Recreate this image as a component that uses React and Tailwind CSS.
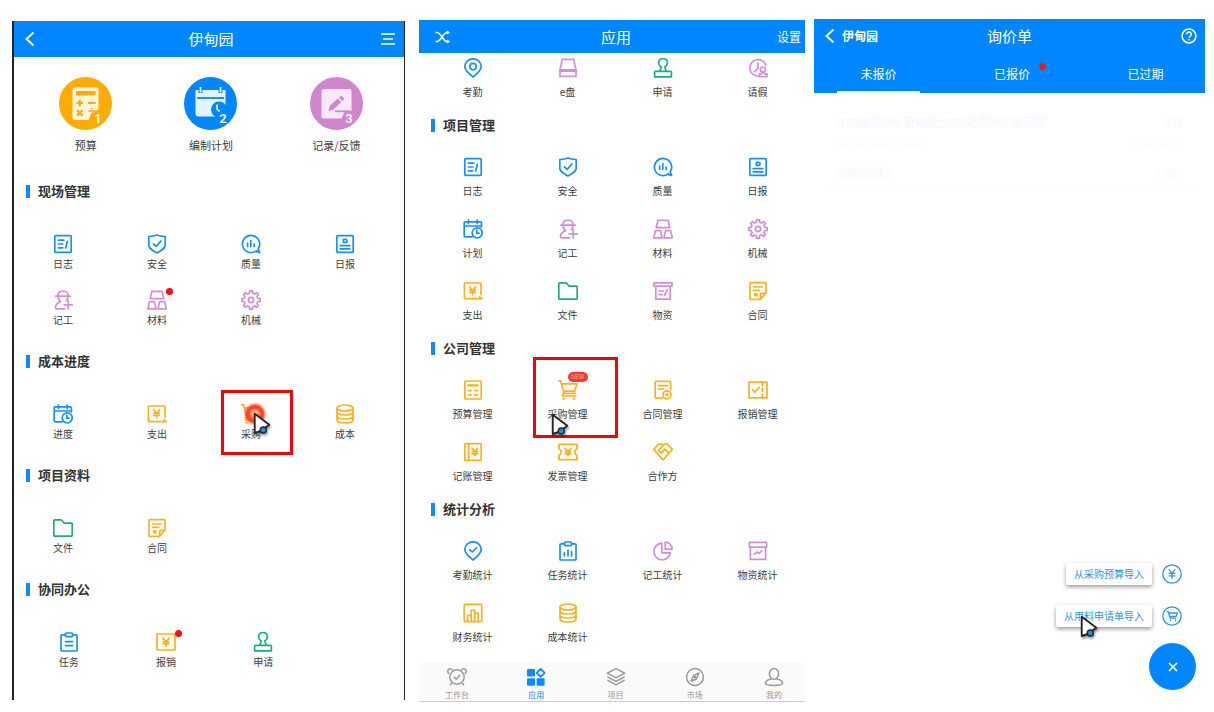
import React from "react";

const COLORS = {
  blue: "text-[#1890fb]",
  purple: "text-[#d28fd8]",
  orange: "text-[#ffb020]",
  green: "text-[#1fae70]",
};

const YEN = "M6.8 6.2 10 9.6 13.2 6.2M10 9.6V14M7.2 9.8h5.6M7.2 11.9h5.6";

function gearOutline(teeth, outer, inner) {
  const points = [];
  for (let k = 0; k < teeth; k++) {
    const base = (k * 360) / teeth - 90;
    [
      [-13, inner],
      [-9, outer],
      [9, outer],
      [13, inner],
    ].forEach(([offset, r]) => {
      const a = ((base + offset) * Math.PI) / 180;
      points.push(`${(10 + r * Math.cos(a)).toFixed(2)} ${(10 + r * Math.sin(a)).toFixed(2)}`);
    });
  }
  return `M${points.join("L")}z`;
}

const ICONS = {
  log: (
    <>
      <rect x="1.8" y="1.6" width="16.4" height="16.8" rx="1" />
      <path d="M5.4 6.2h5.4M5.4 10h4.4M5.4 13.8h4.4M14.4 7.2l-1.8 6.8" />
    </>
  ),
  shield: (
    <>
      <path d="M10 1c2.400 1 5 1.400 8.200 1.500v8.800c0 3-3.400 5-8.200 7.700-4.800-2.700-8.200-4.700-8.200-7.700V2.500C4.800 2.400 7.600 2 10 1z" />
      <path d="M6.400 9.800l2.600 2.600 5-5.400" />
    </>
  ),
  quality: (
    <>
      <path d="M15.600 16.600a8.600 8.600 0 1 1 1.600-1.800l1.400 3.600-3-.8" />
      <path d="M6.600 9v3.400M9.800 6.600v5.800M13.200 10v2.400" />
    </>
  ),
  daily: (
    <>
      <rect x="1.800" y="1.600" width="16.400" height="16.800" rx="1" />
      <path d="M8.400 5.400h2.200a1.500 1.500 0 0 1 0 3H8.400zM5.200 11.600h9.600M5.200 14.800h9.600" />
    </>
  ),
  plan: (
    <>
      <path d="M18.400 8V3.800a1 1 0 0 0-1-1H2.200a1 1 0 0 0-1 1v13a1 1 0 0 0 1 1h7M1.200 7h17.200M5.400 1v3.600M14.200 1v3.600" />
      <circle cx="14.200" cy="13.800" r="5" />
      <path d="M13.800 11v3.200h2.200" />
    </>
  ),
  worker: (
    <path d="M2.800 6.200h14.400M4.800 6.200C4.800 3 7 1 10 1s5.200 2 5.200 5.200M5.200 6.400c0 2.600 1 4.400 2.400 5.400-3 1.200-5.200 2.800-5.200 5.800 0 .8.400 1.200 1.200 1.200h8M15 6.400c0 1.600-.6 3-1.600 4.200M15.200 10.800v8M11 14.800h8.400" />
  ),
  material: (
    <path d="M4.900 1.400h10.200l1.700 7.200H3.200zM2.400 11.600h5l1.700 7.200H.8zM12.600 11.600h5l1.700 7.200H11z" />
  ),
  gear: (
    <>
      <path d={gearOutline(8, 9.300, 7)} />
      <circle cx="10" cy="10" r="2.600" />
    </>
  ),
  expense: (
    <>
      <path d="M18 13.600V3a1 1 0 0 0-1-1H2.400a1 1 0 0 0-1 1v13.600a1 1 0 0 0 1 1H19.200M16.800 15.800l2.200 1.800" />
      <path d="M6.600 5.800 9.600 9l3-3.200M9.600 9v4.600M6.800 9.200h5.600M6.800 11.400h5.600" />
    </>
  ),
  folder: (
    <path d="M.8 17.200V2.800a1 1 0 0 1 1-1h6.400l3 3.400h7a1 1 0 0 1 1 1v11a1 1 0 0 1-1 1H1.800a1 1 0 0 1-1-1z" />
  ),
  supplies: (
    <path d="M1 1.800h18v3.400H1zM2.800 5.200v13h14.400v-13M6 10h4.400M5.800 13.600h3.400M14.200 8.800l-2.600 5.400" />
  ),
  contract: (
    <>
      <path d="M18 12V2.600a1 1 0 0 0-1-1H3a1 1 0 0 0-1 1v14.800a1 1 0 0 0 1 1h9.400zM12.600 18v-4.600a1 1 0 0 1 1-1h4.200" />
      <path d="M5.600 6h8.800M5.600 9.400h6" />
      <circle cx="7.800" cy="13.800" r="1.200" fill="currentColor" />
    </>
  ),
  stamp: (
    <path d="M8.200 8.800a4.400 4.400 0 1 1 3.600 0l1.400 4.600h4.200a1 1 0 0 1 1 1v4.400H1.600v-4.400a1 1 0 0 1 1-1h4.200zM7 13.400h6" />
  ),
  pin: (
    <>
      <path d="M10 19C5.600 15.600 1.800 12.400 1.800 8.600a8.200 7.800 0 0 1 16.400 0C18.200 12.400 14.400 15.600 10 19z" />
      <circle cx="10" cy="8.600" r="3.200" />
    </>
  ),
  pinCheck: (
    <>
      <path d="M10 19C5.600 15.600 1.800 12.400 1.800 8.600a8.200 7.800 0 0 1 16.400 0C18.200 12.400 14.400 15.600 10 19z" />
      <path d="M6.600 8.600 9.200 11l4.400-4.200" />
    </>
  ),
  disk: (
    <>
      <path d="M4.200 1.400h11.600l2.200 11H2zM2 12.400h16v6H2z" />
      <path d="M2.400 12.600h15.200" strokeWidth="3" />
    </>
  ),
  leave: (
    <>
      <path d="M18 7.200A8.300 8.300 0 1 0 10 18.200M10 5v5.400L6.600 13.600" />
      <circle cx="15" cy="11.600" r="2.600" />
      <path d="M13.800 14v1.800h-2.400v2.800h7.600v-2.800h-2.600V14" />
    </>
  ),
  cart: (
    <>
      <path d="M.8.800h1.800l3.400 12.600h11.200M3.400 3.800H19l-2.400 7.400H5.400" />
      <path d="M5.800 13.400 4.400 16h13.400" />
      <path d="M5.200 18.800h.8M15.600 18.800h.8" strokeWidth="2" />
    </>
  ),
  budget: (
    <>
      <rect x="1.800" y="1" width="16.400" height="18" rx="1" />
      <path d="M5.200 5.400h9.600" strokeWidth="2.200" />
      <path d="M5.400 10.600h2.600M11.800 10.600h2.600M5.400 14.800h2.600M11.800 14.800h2.600" />
    </>
  ),
  contractManage: (
    <>
      <path d="M17.600 9.600V2.400a1 1 0 0 0-1-1H3.200a1 1 0 0 0-1 1v14.800a1 1 0 0 0 1 1h6.200M5.200 5.600h9.400M5.200 9h5.600" />
      <circle cx="14" cy="14.800" r="4" />
      <circle cx="14" cy="14.800" r=".9" fill="currentColor" />
    </>
  ),
  ticketCheck: (
    <>
      <path d="M1 2.200h18v15.600H1z" />
      <path d="M14.400 2.400v3.200M14.400 8.400v3.200M14.400 14.400v3.200" strokeWidth="2" />
      <path d="M4.600 9.600l2.400 2.600 4.200-4.800" />
    </>
  ),
  ledger: (
    <>
      <rect x="1.800" y="1.600" width="16.400" height="16.800" rx="1" />
      <path d="M5.600 1.800v16.400" />
      <path d="M9 6.200 11.800 9.400 14.600 6.200M11.800 9.400v4.400M9 9.600h5.600M9 11.800h5.600" />
    </>
  ),
  invoice: (
    <>
      <path d="M1 2.400h18v4.400a3.400 3.400 0 0 0 0 6.400v4.400H1v-4.400a3.400 3.400 0 0 0 0-6.400z" />
      <path d={YEN} />
    </>
  ),
  partner: (
    <path d="M.8 7.400 5.400 2.200h3.400L10 3.600l1.200-1.400h3.400l4.600 5.200L10 18zM10 3.600 5.400 8.400l2.800 2.800 3.800-4 3.800 4" />
  ),
  clipboard: (
    <>
      <path d="M6.400 2.800H3a1 1 0 0 0-1 1v14.200a1 1 0 0 0 1 1h14a1 1 0 0 0 1-1V3.800a1 1 0 0 0-1-1h-3.400" />
      <rect x="6.400" y="1" width="7.200" height="3.600" rx="1" />
      <path d="M6.400 9.600h7.200M6.400 13.600h7.200" />
    </>
  ),
  clipboardChart: (
    <>
      <path d="M6.400 2.800H3a1 1 0 0 0-1 1v14.200a1 1 0 0 0 1 1h14a1 1 0 0 0 1-1V3.800a1 1 0 0 0-1-1h-3.400" />
      <rect x="6.400" y="1" width="7.200" height="3.600" rx="1" />
      <path d="M6.400 11.800v3M10 9.200v5.600M13.600 10.600v4.200" />
    </>
  ),
  pie: (
    <>
      <path d="M8.800 2.200a8.300 8.300 0 1 0 8.600 9.600H8.800z" />
      <path d="M12.200 1.200v7h7a7 7 0 0 0-7-7z" />
    </>
  ),
  suppliesChart: (
    <path d="M1.400 1.400h17.200v4.800H1.400zM2.400 6.200v12.200h15.200V6.200M6.400 13.400l2.600-2.400 2 1.400 2.800-2.400" />
  ),
  finance: (
    <>
      <rect x="1.200" y="1.400" width="17.600" height="17.200" rx="1" />
      <path d="M4.600 18v-5.600h3.600M8.200 18V7h3.400v11M11.600 10.200h3.600V18" />
    </>
  ),
  coins: (
    <>
      <ellipse cx="10" cy="4" rx="8" ry="3" />
      <path d="M2 4v12c0 1.800 3.400 3 8 3s8-1.200 8-3V4M2 8c0 1.800 3.400 3 8 3s8-1.200 8-3M2 12c0 1.800 3.400 3 8 3s8-1.200 8-3" />
    </>
  ),
  reimburse: (
    <>
      <rect x="1" y="2" width="18" height="16" rx=".6" />
      <path d={YEN} />
    </>
  ),
};

function Icon({ name }) {
  return (
    <svg
      viewBox="0 0 20 20"
      className="h-5 w-5 shrink-0"
      fill="none"
      stroke="currentColor"
      strokeWidth="1.700"
      strokeLinecap="round"
      strokeLinejoin="round"
      aria-hidden="true"
    >
      {ICONS[name]}
    </svg>
  );
}

function Pointer({ className }) {
  return (
    <svg
      viewBox="0 0 18 24"
      className={`pointer-events-none absolute h-7 w-[21px] drop-shadow-[1px_2px_1px_rgba(0,0,0,0.4)] ${className}`}
      aria-hidden="true"
    >
      <path d="M1.500 1.500v16.500l4.500-1.500 8-5.500z" fill="#fff" stroke="#26262c" strokeWidth="1.600" strokeLinejoin="round" />
      <circle cx="8.800" cy="15.400" r="2.600" fill="#1e93cc" stroke="#1c2a38" strokeWidth="1.200" />
    </svg>
  );
}

function Item({ icon, color, label, dot, isNew, roomy, children }) {
  return (
    <button type="button" className={`relative flex flex-col items-center ${roomy ? "gap-1.5" : "gap-0.5"}`}>
      <span className={`relative ${COLORS[color]}`}>
        <Icon name={icon} />
        {dot && <span className="absolute -top-0.5 -right-1.5 h-[7px] w-[7px] rounded-full bg-[#fd0d0d]" />}
        {isNew && (
          <span className="absolute -top-2 left-2.5 flex h-2.5 w-5 items-center justify-center rounded-full bg-[#f93a30] text-[6px] leading-none text-[#ffb3ae]">
            NEW
          </span>
        )}
      </span>
      <span className="text-[10px] leading-4 whitespace-nowrap text-[#3c3c3c]">{label}</span>
      {children}
    </button>
  );
}

function SectionTitle({ children }) {
  return (
    <h2 className="flex h-5 items-center gap-2 pl-3 text-[13px] leading-5 font-bold text-[#333]">
      <span className="h-[13px] w-1 bg-[#0a8bff]" />
      {children}
    </h2>
  );
}

const projectSections = [
  {
    title: "现场管理",
    items: [
      ["log", "blue", "日志"],
      ["shield", "blue", "安全"],
      ["quality", "blue", "质量"],
      ["daily", "blue", "日报"],
      ["worker", "purple", "记工"],
      ["material", "purple", "材料", "dot"],
      ["gear", "purple", "机械"],
    ],
  },
  {
    title: "成本进度",
    items: [
      ["plan", "blue", "进度"],
      ["expense", "orange", "支出"],
      ["cart", "orange", "采购", "tap"],
      ["coins", "orange", "成本"],
    ],
  },
  {
    title: "项目资料",
    items: [
      ["folder", "green", "文件"],
      ["contract", "orange", "合同"],
    ],
  },
  {
    title: "协同办公",
    wide: true,
    items: [
      ["clipboard", "blue", "任务"],
      ["reimburse", "orange", "报销", "dot"],
      ["stamp", "green", "申请"],
    ],
  },
];

const steps = [
  {
    label: "预算",
    n: 1,
    fill: "#ffab00",
    art: (
      <>
        <path d="M15.500 10.500h22a2 2 0 0 1 2 2V32l-7 4-3 7H15.500a2 2 0 0 1-2-2V12.500a2 2 0 0 1 2-2z" fill="#fff5dc" />
        <path d="M17 14h19.500v4.500H17z" fill="#ffab00" />
        <path d="M17.500 26h6.500M20.700 22.800v6.500M29 26h7.500M18 33.300l5.500 5.500M23.500 33.300l-5.500 5.500" stroke="#ffab00" strokeWidth="2.200" />
        <path d="M29.500 34h6.500M32.700 31v1" stroke="#ffab00" strokeWidth="1.400" />
      </>
    ),
  },
  {
    label: "编制计划",
    n: 2,
    fill: "#0087ff",
    art: (
      <>
        <path d="M11.500 13h30v26.500h-27a3 3 0 0 1-3-3z" fill="#e4f3ff" />
        <path d="M13 21h27" stroke="#0087ff" strokeWidth="1.800" />
        <path d="M16.500 9v7M36.500 9v7" stroke="#0087ff" strokeWidth="4" />
        <path d="M16.500 10v5.500M36.500 10v5.500" stroke="#e4f3ff" strokeWidth="1.800" />
        <circle cx="35" cy="32.500" r="8" fill="#0087ff" />
        <path d="M36 38h6v-6h-3z" fill="#0087ff" />
        <path d="M33 27.500v4.500l2.500 2.500" stroke="#e4f3ff" strokeWidth="1.700" fill="none" />
      </>
    ),
  },
  {
    label: "记录/反馈",
    n: 3,
    fill: "#cf86cf",
    art: (
      <>
        <path d="M13.500 12h26a2 2 0 0 1 2 2v20l-7 1-3 6.500h-18a2 2 0 0 1-2-2V14a2 2 0 0 1 2-2z" fill="#f8e9f8" />
        <path d="M18.500 34l1.200-5 8-7.500 3.600 3.600-8 7.700zM29 20.500l2.200-2 3.400 3.400-2.200 2z" fill="#cf86cf" />
        <path d="M25 34.300h16" stroke="#cf86cf" strokeWidth="1.800" />
      </>
    ),
  },
];

function ProjectPhone() {
  return (
    <section className="mt-[21px] mr-3.5 mb-3 min-w-0 flex-[390] border-r border-l-2 border-[#222] bg-white">
      <header className="grid h-9 grid-cols-3 items-center bg-[#0087ff] pr-2 pl-3 text-white">
        <button type="button" aria-label="返回" className="-ml-1 w-fit">
          <svg viewBox="0 0 16 16" className="h-4 w-4" fill="none" stroke="currentColor" strokeWidth="1.900">
            <path d="M11.500 1.500 4.500 8l7 6.500" />
          </svg>
        </button>
        <h1 className="text-center text-[15px] leading-5">伊甸园</h1>
        <button type="button" aria-label="菜单" className="w-fit justify-self-end">
          <svg viewBox="0 0 16 14" className="h-3.5 w-4" fill="none" stroke="currentColor" strokeWidth="1.600">
            <path d="M1 2h14M3 7h10M1 12h14" />
          </svg>
        </button>
      </header>
      <div className="mt-5 grid grid-cols-3 pr-[5px] pl-[9px]">
        {steps.map((s) => (
          <button type="button" key={s.n} className="flex flex-col items-center gap-[7px]">
            <svg viewBox="0 0 53 53" className="h-[53px] w-[53px]" aria-hidden="true">
              <circle cx="26.500" cy="26.500" r="26.500" fill={s.fill} />
              {s.art}
              <text x="39" y="46" textAnchor="middle" fill="#fff" fontSize="13" fontFamily="Roboto, sans-serif" fontWeight="500">
                {s.n}
              </text>
            </svg>
            <span className="text-[11px] leading-4 text-[#3c3c3c]">{s.label}</span>
          </button>
        ))}
      </div>
      <div className="mt-7 flex flex-col gap-[23px]">
        {projectSections.map((s) => (
          <div key={s.title}>
            <SectionTitle>{s.title}</SectionTitle>
            <div
              className={`mt-[33px] grid gap-y-[18px] ${s.wide ? "grid-cols-3 pr-[92px] pl-1.5" : "grid-cols-4 pr-3 pl-0.5"}`}
            >
              {s.items.map(([icon, color, label, flag]) => (
                <Item key={label} icon={icon} color={color} label={label} dot={flag === "dot"}>
                  {flag === "tap" && (
                    <>
                      <span className="absolute top-0 left-1/2 -ml-1.5 h-5 w-5 rounded-full border-[5px] border-[#ff3c1e] bg-[#ff9a50]/70 blur-[1px]" />
                      <span className="absolute -top-3.5 left-1/2 -ml-[30px] h-[65px] w-[72px] border-[3px] border-[#f20505]" />
                      <Pointer className="top-2 left-1/2 ml-0.5" />
                    </>
                  )}
                </Item>
              ))}
            </div>
          </div>
        ))}
      </div>
    </section>
  );
}

const appSections = [
  {
    items: [
      ["pin", "blue", "考勤"],
      ["disk", "purple", "e盘"],
      ["stamp", "green", "申请"],
      ["leave", "purple", "请假"],
    ],
  },
  {
    title: "项目管理",
    items: [
      ["log", "blue", "日志"],
      ["shield", "blue", "安全"],
      ["quality", "blue", "质量"],
      ["daily", "blue", "日报"],
      ["plan", "blue", "计划"],
      ["worker", "purple", "记工"],
      ["material", "purple", "材料"],
      ["gear", "purple", "机械"],
      ["expense", "orange", "支出"],
      ["folder", "green", "文件"],
      ["supplies", "purple", "物资"],
      ["contract", "orange", "合同"],
    ],
  },
  {
    title: "公司管理",
    items: [
      ["budget", "orange", "预算管理"],
      ["cart", "orange", "采购管理", "tap"],
      ["contractManage", "orange", "合同管理"],
      ["ticketCheck", "orange", "报销管理"],
      ["ledger", "orange", "记账管理"],
      ["invoice", "orange", "发票管理"],
      ["partner", "orange", "合作方"],
    ],
  },
  {
    title: "统计分析",
    items: [
      ["pinCheck", "blue", "考勤统计"],
      ["clipboardChart", "blue", "任务统计"],
      ["pie", "purple", "记工统计"],
      ["suppliesChart", "purple", "物资统计"],
      ["finance", "orange", "财务统计"],
      ["coins", "orange", "成本统计"],
    ],
  },
];

const tabs = [
  {
    label: "工作台",
    art: (
      <>
        <circle cx="10" cy="10" r="7.200" />
        <path d="M6.800 9.800l2.400 2.400 4-4.400M4.800 15.800 3 18.400M15.200 15.800l1.800 2.600M2.200 6.800a2.600 2.600 0 1 1 3.400-3.600M17.800 6.800a2.600 2.600 0 1 0-3.400-3.600" />
      </>
    ),
  },
  {
    label: "应用",
    active: true,
    art: (
      <>
        <g fill="currentColor" stroke="none">
          <rect x="1" y="2" width="8" height="7.600" rx="1" />
          <rect x="1" y="11.200" width="8" height="7.600" rx="1" />
          <rect x="10.600" y="11.200" width="8" height="7.600" rx="1" />
        </g>
        <path d="M14.600 1.800 18.600 5.800l-4 4-4-4z" strokeWidth="1.800" />
      </>
    ),
  },
  {
    label: "项目",
    art: <path d="M10 1.600 18.600 6.200 10 10.800 1.400 6.200zM1.400 9.800 10 14.400l8.600-4.600M1.400 13.200 10 17.800l8.600-4.600" />,
  },
  {
    label: "市场",
    art: (
      <>
        <circle cx="10" cy="10" r="8.400" />
        <path d="M14 6l-2.600 6L6 14.200 8.600 8.400z" />
        <circle cx="10" cy="10.200" r=".6" />
      </>
    ),
  },
  {
    label: "我的",
    art: (
      <>
        <ellipse cx="10" cy="6.800" rx="4.600" ry="5.400" />
        <path d="M7.600 11.800C4.400 12.600 1.400 13.600 1.400 16c0 1.600 3.600 2.400 8.600 2.400s8.600-.8 8.600-2.400c0-2.400-3-3.400-6.200-4.200" />
      </>
    ),
  },
];

function AppsPhone() {
  return (
    <section className="mt-5 mr-[9px] mb-2.5 flex min-w-0 flex-[386] flex-col bg-white">
      <header className="grid h-[33px] grid-cols-3 items-center bg-[#0087ff] pr-1 pl-3 text-white">
        <button type="button" aria-label="切换" className="ml-1 w-fit">
          <svg viewBox="0 0 16 14" className="h-3.5 w-4" fill="none" stroke="currentColor" strokeWidth="1.500">
            <path d="M.5 2.500h1.500C6 2.500 8 11.500 12 11.500h1.500M.5 11.500h1.500C6 11.500 8 2.500 12 2.500h1.500" />
            <path d="M12 1v3l2.600-1.500zM12 10v3l2.600-1.500z" fill="currentColor" strokeWidth=".8" />
          </svg>
        </button>
        <h1 className="text-center text-[15px] leading-5">应用</h1>
        <button type="button" className="justify-self-end text-xs">
          设置
        </button>
      </header>
      <div className="flex flex-col gap-[15px] pt-[5px]">
        {appSections.map((s, i) => (
          <div key={i}>
            {s.title && <SectionTitle>{s.title}</SectionTitle>}
            <div className={`grid grid-cols-4 gap-y-5 pl-1.5 ${s.title ? "mt-[22px]" : ""}`}>
              {s.items.map(([icon, color, label, flag]) => (
                <Item key={label} roomy icon={icon} color={color} label={label} isNew={flag === "tap"}>
                  {flag === "tap" && (
                    <>
                      <span className="absolute -top-[23px] left-1/2 -ml-[35px] h-[81px] w-[85px] border-[3px] border-[#f20505]" />
                      <Pointer className="top-[33px] left-1/2 -ml-[17px]" />
                    </>
                  )}
                </Item>
              ))}
            </div>
          </div>
        ))}
      </div>
      <nav className="mt-auto flex h-10 justify-between border-b border-[#ccc] bg-[#fafafa] pt-[5px] pr-3 pl-[19px]">
        {tabs.map((t) => (
          <a
            key={t.label}
            href="#"
            className={`flex w-[38px] flex-col items-center gap-0.5 ${t.active ? "text-[#0a8bff]" : "text-[#999]"}`}
          >
            <svg
              viewBox="0 0 20 20"
              className="h-5 w-5"
              fill="none"
              stroke="currentColor"
              strokeWidth="1.500"
              strokeLinejoin="round"
              aria-hidden="true"
            >
              {t.art}
            </svg>
            <span className="text-[8px] leading-3">{t.label}</span>
          </a>
        ))}
      </nav>
    </section>
  );
}

function ImportAction({ label, children, pointer }) {
  return (
    <button type="button" className="relative flex items-center gap-2.5 text-[#2b93e8]">
      <span className="rounded-[2px] bg-white px-2 text-[10px] leading-[22px] shadow-[0_2px_4px_rgba(0,0,0,0.4)]">
        {label}
      </span>
      <svg
        viewBox="0 0 20 20"
        className="h-5 w-5"
        fill="none"
        stroke="currentColor"
        strokeWidth="1.300"
        strokeLinejoin="round"
        aria-hidden="true"
      >
        <circle cx="10" cy="10" r="9.200" />
        {children}
      </svg>
      {pointer && <Pointer className="top-2.5 left-6" />}
    </button>
  );
}

function InquiryPhone() {
  return (
    <section className="relative mt-[19px] mr-[9px] mb-2.5 min-w-0 flex-[391] bg-white">
      <header className="bg-[#0087ff] text-white">
        <div className="grid h-[34px] grid-cols-3 items-center px-2">
          <button type="button" className="flex w-fit items-center gap-1 text-xs font-bold">
            <svg viewBox="0 0 16 16" className="h-4 w-4" fill="none" stroke="currentColor" strokeWidth="1.900">
              <path d="M11.500 1.500 4.500 8l7 6.500" />
            </svg>
            伊甸园
          </button>
          <h1 className="text-center text-[15px] leading-5">询价单</h1>
          <button type="button" aria-label="帮助" className="w-fit justify-self-end">
            <svg viewBox="0 0 16 16" className="h-4 w-4" fill="none" stroke="currentColor" strokeWidth="1.500">
              <circle cx="8" cy="8" r="6.900" />
              <path d="M5.700 6.300a2.300 2.300 0 1 1 3.400 2c-.8.4-1.100.8-1.100 1.500M8 11v1.400" />
            </svg>
          </button>
        </div>
        <div role="tablist" className="flex h-10 justify-between pr-[18px] pl-[23px]">
          {["未报价", "已报价", "已过期"].map((t, i) => (
            <button
              type="button"
              role="tab"
              key={t}
              aria-selected={i === 0}
              className={`relative w-[83px] border-b-2 pt-1 text-xs ${i === 0 ? "border-white" : "border-transparent"}`}
            >
              {t}
              {i === 1 && <span className="absolute top-2.5 right-2 h-[7px] w-[7px] rounded-full bg-[#fb1616]" />}
            </button>
          ))}
        </div>
      </header>
      <article className="mx-2 border-b border-[#fafafa] px-3.5 pt-5 pb-2 text-[10px] text-[#fbfafa]">
        <div className="flex justify-between text-xs leading-[18px] text-[#f3f8fd]">
          <span>D20硬质PVC管暗配,D25硬质PVC管暗配</span>
          <span>2周</span>
        </div>
        <div className="mt-0.5 flex justify-between leading-5">
          <span>UDT18120027/2660</span>
          <span>2018-12-27</span>
        </div>
        <div className="mt-3 flex items-center justify-between leading-4">
          <span className="rounded-full bg-[#fdfcfe] px-2">采购清单</span>
          <span>未报价</span>
        </div>
      </article>
      <div className="absolute right-[9px] bottom-3 flex flex-col items-end">
        <div className="mr-3.5 flex flex-col items-end gap-5">
          <ImportAction label="从采购预算导入">
            <path d="M6.800 5.400 10 9.200l3.200-3.800M10 9.200v5.600M6.600 9.400h6.800M6.600 11.800h6.800" />
          </ImportAction>
          <ImportAction label="从用料申请单导入" pointer>
            <path d="M4.600 5.600h1.600l2 6.600h6M6.800 7h8.400l-1 3.400H7.800" />
            <path d="M8 14.400h1M13 14.400h1" strokeWidth="1.600" />
          </ImportAction>
        </div>
        <button
          type="button"
          aria-label="关闭"
          className="mt-4 flex h-[47px] w-[47px] items-center justify-center rounded-full bg-[#0087ff] text-white"
        >
          <svg viewBox="0 0 10 10" className="h-2.5 w-2.5" fill="none" stroke="currentColor" strokeWidth="1.700">
            <path d="M1 1l8 8M9 1 1 9" />
          </svg>
        </button>
      </div>
    </section>
  );
}

export default function App() {
  return (
    <main className="flex min-h-screen bg-white pl-3 font-['Noto_Sans_CJK_SC',sans-serif]">
      <ProjectPhone />
      <AppsPhone />
      <InquiryPhone />
    </main>
  );
}
